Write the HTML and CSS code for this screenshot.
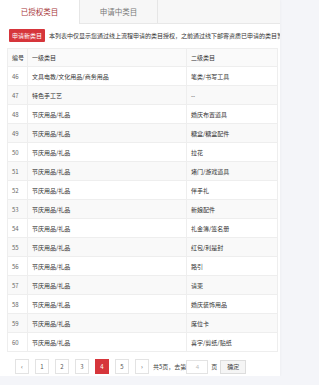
FILE: index.html
```html
<!DOCTYPE html>
<html lang="zh-CN">
<head>
    <meta charset="UTF-8">
    <title>类目管理</title>
    <link rel="stylesheet" href="styles.css">
</head>
<body>
    <div class="panel">
        <div class="tabs">
            <div class="tab active">已授权类目</div>
            <div class="tab">申请中类目</div>
        </div>

        <div class="notice">
            <button type="button" class="btn-apply">申请新类目</button>
            <span class="notice-text">本列表中仅显示您通过线上流程申请的类目授权，之前通过线下邮寄资质已申请的类目暂不展示</span>
        </div>

        <table class="cat-table">
            <thead>
                <tr>
                    <th class="col-no">编号</th>
                    <th class="col-first">一级类目</th>
                    <th>二级类目</th>
                </tr>
            </thead>
            <tbody>
                <tr><td>46</td><td>文具电教/文化用品/商务用品</td><td>笔类/书写工具</td></tr>
                <tr><td>47</td><td>特色手工艺</td><td>--</td></tr>
                <tr><td>48</td><td>节庆用品/礼品</td><td>婚庆布置道具</td></tr>
                <tr><td>49</td><td>节庆用品/礼品</td><td>糖盒/糖盒配件</td></tr>
                <tr><td>50</td><td>节庆用品/礼品</td><td>拉花</td></tr>
                <tr><td>51</td><td>节庆用品/礼品</td><td>堵门/游戏道具</td></tr>
                <tr><td>52</td><td>节庆用品/礼品</td><td>伴手礼</td></tr>
                <tr><td>53</td><td>节庆用品/礼品</td><td>新娘配件</td></tr>
                <tr><td>54</td><td>节庆用品/礼品</td><td>礼金簿/签名册</td></tr>
                <tr><td>55</td><td>节庆用品/礼品</td><td>红包/利是封</td></tr>
                <tr><td>56</td><td>节庆用品/礼品</td><td>路引</td></tr>
                <tr><td>57</td><td>节庆用品/礼品</td><td>请柬</td></tr>
                <tr><td>58</td><td>节庆用品/礼品</td><td>婚庆装饰用品</td></tr>
                <tr><td>59</td><td>节庆用品/礼品</td><td>席位卡</td></tr>
                <tr><td>60</td><td>节庆用品/礼品</td><td>喜字/剪纸/贴纸</td></tr>
            </tbody>
        </table>

        <div class="pager">
            <a class="page">&lsaquo;</a>
            <a class="page">1</a>
            <a class="page">2</a>
            <a class="page">3</a>
            <a class="page current">4</a>
            <a class="page">5</a>
            <a class="page">&rsaquo;</a>
            <span class="pager-text">共5页，去第</span>
            <input type="text" class="page-input" placeholder="4">
            <span class="pager-text">页</span>
            <button type="button" class="btn-go">确定</button>
        </div>
    </div>
</body>
</html>
```

FILE: styles.css
```css
* {
    box-sizing: border-box;
}
body {
    margin: 0;
    background-color: #f4f5f9;
    font-family: "Noto Sans CJK SC", "Noto Sans", sans-serif;
    color: #333;
}
.panel {
    width: 280px;
    height: 376px;
    overflow: hidden;
    background-color: #fff;
    box-shadow: 0 0 3px rgba(0, 0, 0, 0.05);
}
.tabs {
    display: flex;
    height: 24px;
    background-color: #f7f7f7;
    border-bottom: 1px solid #e8e8e8;
}
.tab {
    width: 78px;
    line-height: 23px;
    text-align: center;
    font-size: 7.5px;
    color: #777;
    border-right: 1px solid #e6e6e6;
}
.tab.active {
    width: 80px;
    height: 24px;
    background-color: #fff;
    color: #a8373c;
}
.notice {
    display: flex;
    align-items: center;
    gap: 4px;
    padding: 5px 0 0 9px;
    overflow: hidden;
}
.btn-apply {
    flex-shrink: 0;
    width: 36px;
    height: 13px;
    padding: 0;
    border: none;
    border-radius: 1px;
    background-color: #d6353b;
    color: #fff;
    font-family: inherit;
    font-size: 6px;
}
.notice-text {
    white-space: nowrap;
    font-size: 6px;
    color: #333;
}
.cat-table {
    width: 271px;
    margin: 6px 0 0 7px;
    border-collapse: collapse;
    table-layout: fixed;
    font-size: 6px;
}
.cat-table th,
.cat-table td {
    height: 19px;
    padding: 0 4px;
    text-align: left;
    font-weight: normal;
    white-space: nowrap;
    border: 1px solid #eeeeee;
}
.cat-table th {
    height: 18px;
    background-color: #fafafa;
}
.cat-table td:first-child {
    color: #666;
}
.cat-table tbody tr:nth-child(even) {
    background-color: #f9f9f9;
}
.col-no {
    width: 20px;
}
.col-first {
    width: 159px;
}
.pager {
    display: flex;
    align-items: center;
    margin: 7px 0 0 15px;
    font-size: 6px;
}
.page {
    width: 14px;
    height: 15px;
    margin-right: 6px;
    line-height: 13px;
    text-align: center;
    border: 1px solid #e3e3e3;
    color: #555;
    background-color: #fff;
}
.page.current {
    border-color: #d6353b;
    background-color: #d6353b;
    color: #fff;
}
.pager-text {
    margin-left: -2px;
    color: #444;
}
.page-input {
    width: 22px;
    height: 14px;
    margin: 0 5px 0 0;
    padding: 0;
    border: 1px solid #e3e3e3;
    font-size: 6px;
    text-align: center;
}
.page-input::placeholder {
    color: #bbb;
}
.btn-go {
    width: 26px;
    height: 14px;
    margin-left: 3px;
    padding: 0;
    border: 1px solid #ddd;
    background-color: #f5f5f5;
    font-family: inherit;
    font-size: 6px;
    color: #444;
}
```
